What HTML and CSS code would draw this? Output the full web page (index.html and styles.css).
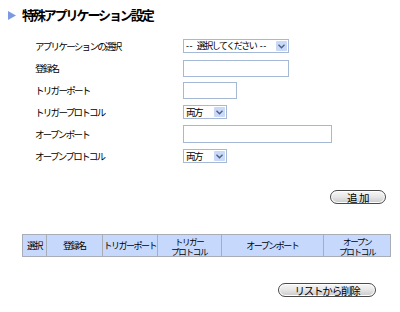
FILE: index.html
```html
<!DOCTYPE html>
<html lang="ja">
<head>
<meta charset="utf-8">
<link rel="stylesheet" href="styles.css">
</head>
<body>
<div class="title">
  <svg class="tri" width="8" height="9" viewBox="0 0 8 9"><polygon points="0,0 8,4.5 0,9" fill="#7a9be0"/></svg>
  <h1>特殊アプリケーション設定</h1>
</div>
<div class="form">
  <div class="row"><span class="lbl">アプリケーションの選択</span><span class="sel w106"><span class="val wide"><span class="dash">--</span> 選択してください <span class="dash">--</span></span><span class="arr"><svg width="7" height="5" viewBox="0 0 7 5"><polyline points="0.5,0.8 3.5,3.8 6.5,0.8" fill="none" stroke="#4d6185" stroke-width="1.4"/></svg></span></span></div>
  <div class="row"><span class="lbl">登録名</span><span class="inp w106"></span></div>
  <div class="row"><span class="lbl">トリガーポート</span><span class="inp w54"></span></div>
  <div class="row"><span class="lbl">トリガープロトコル</span><span class="sel w44"><span class="val">両方</span><span class="arr"><svg width="7" height="5" viewBox="0 0 7 5"><polyline points="0.5,0.8 3.5,3.8 6.5,0.8" fill="none" stroke="#4d6185" stroke-width="1.4"/></svg></span></span></div>
  <div class="row"><span class="lbl">オープンポート</span><span class="inp w149"></span></div>
  <div class="row"><span class="lbl">オープンプロトコル</span><span class="sel w44"><span class="val">両方</span><span class="arr"><svg width="7" height="5" viewBox="0 0 7 5"><polyline points="0.5,0.8 3.5,3.8 6.5,0.8" fill="none" stroke="#4d6185" stroke-width="1.4"/></svg></span></span></div>
</div>
<div class="btnrow add"><button class="pill w56">追 加</button></div>
<table class="list">
  <tr>
    <th class="c1">選択</th>
    <th class="c2">登録名</th>
    <th class="c3">トリガーポート</th>
    <th class="c4"><span class="ln">トリガー</span><span class="ln">プロトコル</span></th>
    <th class="c5">オープンポート</th>
    <th class="c6"><span class="ln">オープン</span><span class="ln">プロトコル</span></th>
  </tr>
</table>
<div class="btnrow del"><button class="pill w98">リストから削除</button></div>
</body>
</html>
```
FILE: styles.css
```css
* { box-sizing: border-box; }
body {
  margin: 0;
  background: #fff;
  font-family: "Noto Sans CJK JP", "Noto Sans", sans-serif;
  color: #000;
  width: 400px;
  height: 312px;
  overflow: hidden;
}
.title {
  display: flex;
  align-items: center;
  margin: 8px 0 0 8px;
  height: 14px;
}
.tri { margin-right: 6px; }
.title h1 {
  margin: 0;
  font-size: 13px;
  font-weight: bold;
  letter-spacing: -2.1px;
  line-height: 14px;
}
.form {
  margin-top: 13px;
  padding-left: 35px;
}
.row {
  display: grid;
  grid-template-columns: 148px auto;
  align-items: center;
  height: 22px;
}
.lbl {
  font-size: 9.5px;
  letter-spacing: -1.7px;
  line-height: 12px;
}
.inp {
  display: block;
  height: 17px;
  border: 1px solid #a5b9d6;
  background: #fff;
}
.w106 { width: 106px; }
.w54 { width: 54px; }
.w149 { width: 149px; height: 18px; }
.w44 { width: 44px; }
.sel {
  display: flex;
  align-items: center;
  justify-content: space-between;
  height: 14px;
  border: 1px solid #a5b9d6;
  background: #fff;
  padding: 0 1px 0 2px;
}
.val {
  font-size: 9.5px;
  letter-spacing: -1.4px;
  line-height: 12px;
  white-space: pre;
}
.val.wide {
  font-size: 9px;
  letter-spacing: -1.5px;
  word-spacing: 3px;
}
.dash {
  font-family: "Liberation Sans", sans-serif;
  letter-spacing: 0.6px;
}
.arr {
  display: flex;
  align-items: center;
  justify-content: center;
  width: 11px;
  height: 10px;
  background: #c9d9f7;
  border-radius: 1px;
}
.btnrow {
  display: flex;
  justify-content: flex-end;
}
.add { margin-top: 23px; padding-right: 14px; }
.del { margin-top: 26px; padding-right: 24px; }
.pill {
  height: 14px;
  padding: 0;
  border: 1.5px solid #4a4a4a;
  border-radius: 7px;
  background: linear-gradient(#f7f7f7, #e6e6e6 50%, #c9c9c9);
  font-family: "Noto Sans CJK JP", sans-serif;
  font-size: 10.5px;
  line-height: 11px;
  color: #000;
  letter-spacing: -0.5px;
  box-shadow: inset 0 0 0 1px #fff;
}
.w56 { width: 56px; }
.w98 { width: 98px; letter-spacing: -1.2px; }
.list {
  margin: 30px 0 0 22px;
  width: 369px;
  border-collapse: collapse;
  height: 22px;
}
.list th {
  background: #c6d9fd;
  border: 1px solid #a8adb8;
  font-weight: normal;
  font-size: 9px;
  letter-spacing: -1.5px;
  line-height: 11px;
  padding: 0;
  text-align: center;
  height: 22px;
  white-space: nowrap;
}
.ln {
  display: block;
  height: 10px;
  line-height: 10px;
  font-size: 8.5px;
  letter-spacing: -1.3px;
}
.c1 { width: 24px; }
.c2 { width: 56px; }
.c3 { width: 55px; }
.c4 { width: 64px; }
.c5 { width: 103px; }
.c6 { width: 67px; }
```
